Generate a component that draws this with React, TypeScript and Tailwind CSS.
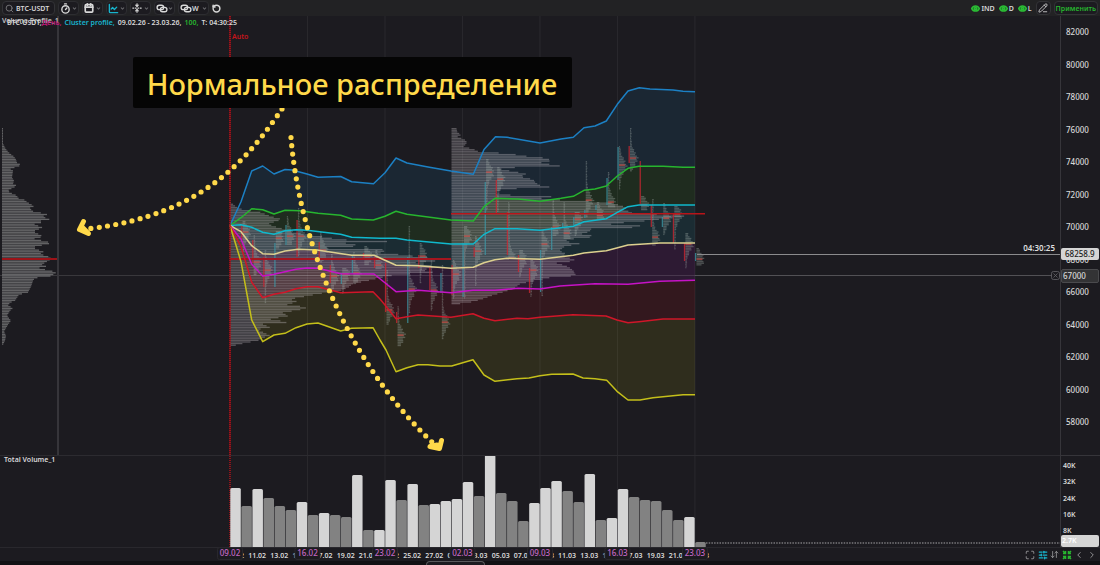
import {
  Search,
  Timer,
  Calendar,
  ChartLine,
  FoldVertical,
  RotateCcw,
  Eye,
  PencilLine,
  Maximize,
  SlidersHorizontal,
  ArrowDownUp,
  ChevronLeft,
  ChevronRight,
  ChevronDown,
} from 'lucide-react';
import type { ReactNode } from 'react';

type Point = [number, number];

const DAY = 11.07;
const START_X = 230;
const ROW = 1.62;

const dayX = (i: number) => START_X + i * DAY;

// Standard deviation bands, top to bottom
const bands: { stroke: string; fill: string; points: Point[] }[] = [
  {
    stroke: '#1c80c4',
    fill: '#1b2733',
    points: [[230, 225.5], [241, 201.7], [251.7, 171], [262.7, 166], [274, 174], [285, 169.5], [292, 170], [307, 174], [318, 177.3], [340.7, 176.5], [351.7, 181.7], [373.5, 183.7], [385, 172.7], [396, 158], [407, 163], [428, 167], [451, 171], [473.3, 174.3], [484, 149.5], [495.5, 136.7], [507, 137.3], [540, 143], [561, 139], [573.3, 137.3], [584, 127.7], [595, 126], [606.3, 121], [617.3, 104.3], [628, 91], [639.3, 87.7], [650, 89], [673, 90], [683, 91.3], [695, 91.7]],
  },
  {
    stroke: '#27b52f',
    fill: '#1f2c1f',
    points: [[230, 225.5], [241, 217.7], [251.7, 208.7], [262.7, 209.7], [274, 214], [285, 210.3], [300, 210.7], [318, 213.3], [340.7, 215.3], [351.7, 219], [373.3, 220], [385, 216.3], [396, 211.3], [407, 214.3], [428, 217], [451, 220], [473.3, 221], [484, 206.7], [495, 198.3], [518, 199], [540, 201.2], [561, 198.3], [573.3, 196.3], [584, 190.3], [595, 189], [606.3, 186], [617.3, 176], [628, 168.3], [639, 166.3], [663, 166.3], [683, 167.3], [695, 167.3]],
  },
  {
    stroke: '#10b8cc',
    fill: '#1b2c33',
    points: [[230, 225.5], [241, 224.7], [251.7, 227.3], [262.7, 232.3], [274, 234.3], [285, 230.7], [296, 229.7], [307, 230.3], [340.7, 234.3], [351.7, 237.3], [380, 238.3], [396, 238.3], [407, 240], [451, 244], [473.3, 244], [484, 234.3], [495, 228.7], [517, 228.7], [540, 230.2], [573.3, 226.3], [584, 221.7], [606.3, 218.7], [617.3, 212.3], [628, 206.7], [639, 205], [695, 205]],
  },
  {
    stroke: '#dcd08f',
    fill: '#2d1a33',
    points: [[230, 225.5], [241, 231.7], [251.7, 245.7], [262.7, 253.7], [274, 254.3], [285, 251], [298, 249.3], [317, 250], [351.7, 255.3], [374, 255.3], [396, 265.3], [418, 265.7], [451, 268.3], [473.3, 267.3], [484, 262.7], [495, 259.7], [507, 258.3], [540, 259.3], [573.3, 255.3], [584, 253], [606.3, 250.7], [628, 245], [660, 243], [695, 243]],
  },
  {
    stroke: '#c613c6',
    fill: '#33181e',
    points: [[230, 225.5], [241, 239.3], [251.7, 264.3], [262.7, 276], [274, 274.3], [296, 269.3], [307, 268], [318, 268.3], [340.7, 273.7], [374, 274], [396, 291.7], [418, 290.3], [451, 292.7], [473, 290.3], [495, 290.3], [518, 288.3], [540, 289], [560, 286], [595, 283.7], [628, 284.3], [660, 281.3], [695, 280.3]],
  },
  {
    stroke: '#cf1629',
    fill: '#2f2d1d',
    points: [[230, 225.5], [241, 246.7], [251.7, 282.3], [262.7, 297.7], [274, 294.3], [285, 292.3], [296, 288.7], [307, 286.7], [318, 286.7], [340.7, 292.7], [373, 291.7], [380, 299], [385, 305], [396, 318.7], [407, 316.7], [418, 315], [451, 317.3], [473, 313.7], [484, 318.3], [495, 320.7], [517, 318.3], [528, 318.7], [540, 317.3], [573, 314.7], [606, 316], [617, 320], [628, 322.7], [639, 321.7], [663, 319], [695, 319]],
  },
  {
    stroke: '#c4bf1a',
    fill: 'none',
    points: [[230, 225.5], [241, 261.7], [251.7, 320], [262.7, 341.7], [274, 335], [285, 333.3], [296, 327.7], [307, 324], [318, 323], [340.7, 331], [351.7, 328.3], [373, 327.7], [380, 340], [386, 350], [396, 371.7], [407, 367.7], [418, 364.7], [428, 364.7], [440, 366], [451.7, 366], [462.7, 362.7], [473, 359.7], [484, 375], [495, 381.3], [517, 378.7], [529, 378], [540, 375.7], [551.7, 374.3], [573, 374], [583, 378], [595, 378.7], [606.7, 380.3], [617, 391.3], [628, 400], [640, 400], [653, 397.7], [683, 394.7], [695, 394.7]],
  },
];

// [y, width] samples of each horizontal volume profile
const totalProfile: Point[] = [
  [128, 0], [132, 1], [143, 1], [147, 3], [150, 5], [153, 8], [156, 12], [159, 14], [162, 15], [164.3, 19], [166, 16], [168, 8], [170, 11], [177, 10], [180, 12], [183, 11], [185.3, 15], [187, 11], [190, 6], [192, 8], [195, 15], [197.5, 16], [199, 22], [202, 26], [205.5, 32], [207.5, 28], [210, 30], [211.7, 33], [213, 47], [214.7, 43], [216.5, 40], [218.3, 50], [220, 39], [222, 39], [224, 31], [226.3, 41], [228, 38], [230, 33], [232, 33], [234, 38], [236, 41], [238, 32], [240, 40], [242.3, 50], [244, 43], [246, 33], [248.5, 33], [250.7, 42], [253.3, 38], [255.5, 45], [257, 49], [259, 48], [262, 43], [264, 40], [265.7, 44], [267.7, 36], [270, 49], [272, 54], [274, 51], [275.7, 48], [277.3, 33], [280, 31], [286, 29], [291.7, 26], [294, 17], [300, 13], [302, 8], [305, 6], [307.3, 11], [310, 8], [315, 5], [320, 9], [324, 6], [331, 2], [335, 4], [340, 3], [346, 0],
];
const firstProfile: Point[] = [
  [202, 1], [203.5, 3], [206, 6], [208, 9], [210, 20], [212, 32], [214, 36], [217, 45], [218.7, 52], [221, 45], [223.5, 38], [226, 45], [228, 52], [231, 60], [233.5, 75], [236, 92], [239, 110], [241, 160], [242.7, 110], [245, 135], [247.5, 95], [249.3, 165], [251.7, 145], [254, 170], [257, 196], [259, 221], [262, 185], [264, 190], [266.7, 216], [269, 190], [271.7, 203], [274.3, 165], [277, 150], [280, 138], [283, 123], [287, 118], [290, 110], [293, 90], [296.7, 70], [298.5, 60], [301.7, 69], [303.5, 53], [306.7, 78], [309, 70], [312.5, 51], [315, 60], [318.5, 40], [321.7, 59], [323.5, 33], [326.7, 40], [329, 27], [332, 34], [335, 40], [337, 33], [340, 28], [342.3, 15], [345, 4], [347, 0],
];
const secondProfile: Point[] = [
  [128, 5], [132, 6], [134, 10], [136, 6], [140, 15], [143, 15], [146, 12], [148.5, 22], [151, 27], [153, 58], [156, 78], [157.5, 95], [160, 100], [163, 85], [164.8, 121], [167, 60], [168.5, 50], [171, 62], [173, 75], [176, 69], [179, 82], [182, 84], [185, 89], [186.5, 99], [188.5, 52], [192, 42], [194, 48], [196, 100], [198, 88], [200, 120], [202, 158], [204.5, 168], [207, 175], [209, 172], [211, 178], [213, 182], [215, 236], [217, 222], [219, 205], [221, 187], [222.5, 164], [224, 158], [226, 209], [228, 140], [231, 138], [233.5, 130], [235.8, 146], [238, 123], [240.5, 112], [243, 128], [246, 113], [250, 108], [253, 114], [255.5, 112], [257.5, 118], [260, 125], [262.5, 105], [265, 114], [267, 118], [270, 122], [272.5, 123], [275, 125], [277, 98], [280, 84], [283, 69], [288, 62], [292, 50], [295, 40], [298, 32], [301, 22], [303.5, 5], [305, 0],
];

interface Candle {
  day: number;
  open: number;
  close: number;
  high: number;
  low: number;
  poc: number;
  up: boolean;
}

const c = (day: number, open: number, close: number, high: number, low: number, poc: number, up: boolean): Candle => ({
  day, open, close, high, low, poc, up,
});

const candles: Candle[] = [
  c(1, 225, 240, 221, 252, 232, false),
  c(2, 240, 263, 235, 277, 262, false),
  c(3, 257, 287, 250, 304, 270, false),
  c(4, 243, 287, 231, 250, 238, true),
  c(5, 225, 245, 216, 246, 236, true),
  c(6, 220, 257, 208, 258, 236, false),
  c(8, 242, 260, 232, 264, 250, false),
  c(9, 265, 283, 254, 294, 276, false),
  c(10, 273, 284, 268, 294, 274, true),
  c(11, 255, 273, 252, 286, 273, true),
  c(12, 253, 260, 246, 266, 256, false),
  c(13, 257, 268, 250, 270, 265, false),
  c(14, 263, 312, 270, 326, 310, false),
  c(15, 312, 323, 306, 347, 335, false),
  c(16, 257, 323, 226, 314, 289, true),
  c(17, 255, 268, 243, 284, 256, false),
  c(18, 267, 290, 259, 311, 290, false),
  c(19, 273, 293, 265, 340, 322, true),
  c(20, 265, 295, 260, 300, 274, false),
  c(21, 243, 297, 226, 300, 236, true),
  c(22, 247, 257, 236, 287, 251, false),
  c(23, 182, 255, 159, 211, 172, true),
  c(24, 180, 213, 167, 213, 179, false),
  c(25, 212, 255, 202, 259, 258, false),
  c(26, 255, 272, 250, 278, 259, false),
  c(27, 268, 293, 260, 298, 270, false),
  c(28, 250, 292, 230, 297, 244, true),
  c(29, 227, 250, 199, 237, 227, true),
  c(30, 223, 228, 202, 240, 233, true),
  c(31, 217, 225, 212, 237, 219, true),
  c(32, 210, 218, 161, 218, 200, true),
  c(33, 205, 210, 202, 220, 215, true),
  c(34, 178, 205, 172, 208, 202, true),
  c(35, 147, 180, 146, 190, 165, true),
  c(36, 146, 163, 128, 172, 158, false),
  c(37, 161, 205, 196, 211, 205, false),
  c(38, 205, 227, 199, 246, 237, false),
  c(39, 217, 227, 203, 237, 218, true),
  c(40, 213, 243, 206, 250, 214, false),
  c(41, 243, 261, 233, 270, 244, false),
  c(42, 253, 261, 248, 267, 259, true),
];

const volumes = [
  59, 41, 58, 49, 41, 37, 45, 32, 34, 32, 30, 72, 17, 17, 67, 47, 63, 42, 43, 46, 48, 65, 51, 92, 54, 46, 26, 44, 59,
  66, 56, 45, 73, 27, 29, 58, 50, 47, 46, 37, 27, 30, 5,
];
const buyDays = [0, 2, 6, 8, 11, 13, 14, 16, 18, 19, 20, 21, 23, 27, 28, 29, 32, 34, 35, 41];

const weekTicks = ['09.02', '16.02', '23.02', '02.03', '09.03', '16.03', '23.03'];
const dayTicks = [
  '09.02', '11.02', '13.02', '15.02', '17.02', '19.02', '21.02', '23.02', '25.02', '27.02', '01.03',
  '03.03', '05.03', '07.03', '09.03', '11.03', '13.03', '15.03', '17.03', '19.03', '21.03', '23.03',
];
const priceTicks = [82000, 80000, 78000, 76000, 74000, 72000, 70000, 68000, 66000, 64000, 62000, 60000, 58000];
const volumeTicks = ['40K', '32K', '24K', '16K', '8K'];

const toPoints = (points: Point[]) => points.map((p) => p.join(',')).join(' ');

function widthAt(samples: Point[], y: number) {
  for (let i = 1; i < samples.length; i++) {
    const [y0, w0] = samples[i - 1];
    const [y1, w1] = samples[i];
    if (y <= y1) return w0 + ((w1 - w0) * (y - y0)) / (y1 - y0);
  }
  return 0;
}

function Profile({ x, samples, color }: { x: number; samples: Point[]; color: string }) {
  const top = samples[0][0];
  const rows = Math.floor((samples[samples.length - 1][0] - top) / ROW);
  return (
    <g fill={color}>
      {Array.from({ length: rows }, (_, i) => {
        const y = top + i * ROW;
        return <rect key={i} x={x} y={y} width={Math.max(1, widthAt(samples, y))} height={1.3} />;
      })}
    </g>
  );
}

function DayCluster({ day, open, close, high, low, poc, up }: Candle) {
  const x = dayX(day) + 0.5;
  const rows = Math.floor((low - high) / ROW);
  return (
    <g>
      {Array.from({ length: rows }, (_, i) => {
        const y = high + i * ROW;
        const near = Math.exp(-Math.pow((y - poc) / 9, 2));
        const width = 1 + near * 5 + ((i * 7 + day * 3) % 5) * 0.5 * (0.3 + near);
        return <rect key={i} x={x + 1} y={y} width={width} height={1.3} fill="#a9b3b0" opacity={0.36} />;
      })}
      <rect x={x - 0.5} y={open} width={1.3} height={close - open} fill={up ? '#3f9aa8' : '#d32732'} opacity={0.75} />
      <rect x={x + 1} y={poc - 0.5} width={6} height={1.2} fill="#d8443c" opacity={0.8} />
    </g>
  );
}

function WeekGrid({ y, height }: { y: number; height: number }) {
  return (
    <g fill="#fff" opacity="0.055">
      {weekTicks.slice(1).map((t, i) => (
        <rect key={t} x={dayX((i + 1) * 7) - 0.5} y={y} width="1" height={height} />
      ))}
    </g>
  );
}

function PriceChart() {
  return (
    <svg viewBox="0 16 1060 439" className="block w-full h-auto">
      {bands.slice(0, -1).map((band, i) => (
        <polygon
          key={band.stroke}
          points={toPoints([...band.points, ...[...bands[i + 1].points].reverse()])}
          fill={band.fill}
        />
      ))}
      <WeekGrid y={16} height={439} />

      <Profile x={2} samples={totalProfile} color="#646466" />
      <Profile x={230} samples={firstProfile} color="rgba(205,200,205,0.35)" />
      <Profile x={451.5} samples={secondProfile} color="rgba(205,200,205,0.35)" />

      {/* Crosshair */}
      <rect x="0" y="275" width="1060" height="1" fill="#fff" opacity="0.13" />
      <rect x="695" y="275" width="365" height="1" fill="#fff" opacity="0.13" />

      {candles.map((candle) => (
        <DayCluster key={candle.day} {...candle} />
      ))}

      {/* Points of control */}
      <rect x="2" y="258" width="56" height="2" fill="#9c1318" />
      <rect x="230" y="258" width="221" height="2" fill="#a3161f" />
      <rect x="451" y="213" width="254" height="1.5" fill="#b81419" />

      {bands.map((band) => (
        <polyline key={band.stroke} points={toPoints(band.points)} fill="none" stroke={band.stroke} strokeWidth="1.5" strokeLinejoin="round" />
      ))}

      <rect x="57" y="16" width="2" height="439" fill="#36353a" />
      <path d="M230 16V455" stroke="#7c1219" strokeWidth="1" />
      <path d="M230 16V455" stroke="#c41119" strokeWidth="1.4" strokeDasharray="1 1" />
      <text x="232" y="39" fontSize="7" fill="#c4151b">Auto</text>

      {/* Last price */}
      <rect x="697" y="254" width="363" height="1" fill="#8b8b8d" />
      <text x="1055" y="251" fontSize="8" fill="#dedede" textAnchor="end">04:30:25</text>
      <g fill="#1c1b20" stroke="#66656a" strokeWidth="0.8">
        <rect x="1051.5" y="271.5" width="8" height="8" rx="2" />
        <path d="M1053.5 273.5l4 4m0-4l-4 4" />
      </g>

      {/* Hand-drawn arrows */}
      <g fill="none" stroke="#ffd94a" strokeLinecap="round" strokeLinejoin="round" strokeWidth="5.2">
        <path d="M282 109C250 155 205 215 90 228.5" strokeDasharray="0 8.35" />
        <path d="M291 137.5C298 225 337 352 433 443" strokeDasharray="0 8.35" />
        <path d="M83.5 221.5L79.500 229.500L88.500 233.500L83 228" strokeWidth="5" />
        <path d="M441.500 440.500L439.500 448.500L430 446.500L437 445" strokeWidth="5" />
      </g>
    </svg>
  );
}

function VolumeChart() {
  return (
    <svg viewBox="0 456 1060 91" className="block w-full h-auto">
      <WeekGrid y={456} height={91} />
      <path d="M230 456V547" stroke="#c41119" strokeWidth="1.4" strokeDasharray="1 1" />
      {volumes.map((v, i) => (
        <path
          key={i}
          d={`M${dayX(i) + 0.3} 547.5v${-v + 1}q0 -1.500 1.500 -1.500h7.500q1.500 0 1.500 1.500v${v - 1}z`}
          fill={buyDays.includes(i) ? '#d5d5d5' : '#828282'}
        />
      ))}
      <path d="M706 543H1060" stroke="#a5a5a7" strokeWidth="1.2" strokeDasharray="1.5 1.2" />
    </svg>
  );
}

function DateAxis() {
  return (
    <svg viewBox="0 547 1020 14" className="block w-full h-auto">
      <rect x="0" y="547" width="1020" height="1" fill="#29282d" />
      {dayTicks.map((label, i) => (
        <text key={label} x={dayX(i * 2) + 5} y="558" fontSize="7" fill="#d8d8d8" textAnchor="middle">
          {label}
        </text>
      ))}
      {weekTicks.map((label, i) => (
        <g key={label}>
          <rect x={dayX(i * 7) - 12.5} y="547.5" width="25" height="12" rx="2" fill="#1c1b20" stroke="#29282d" />
          <text x={dayX(i * 7)} y="556" fontSize="8" fontWeight="500" fill="#c468c4" textAnchor="middle">{label}</text>
        </g>
      ))}
    </svg>
  );
}

function ToolButton({ label, className, children }: { label: string; className: string; children: ReactNode }) {
  return (
    <button
      type="button"
      aria-label={label}
      className={`flex h-[14px] items-center justify-between rounded-sm border border-[#2d2d31] bg-[#1c1b20] px-px ${className}`}
    >
      {children}
      <ChevronDown className="h-[5px] w-[5px] text-[#66666a]" strokeWidth={5} />
    </button>
  );
}

function EyeToggle({ label }: { label: string }) {
  return (
    <button type="button" className="flex items-center gap-px text-[7px] leading-none">
      <Eye className="h-[9px] w-[9px] fill-[#1c6a23] text-[#2bbd35]" strokeWidth={4} />
      {label}
    </button>
  );
}

function LinkIcon() {
  return (
    <svg viewBox="0 0 22 16" className="h-[9px] w-[12px] shrink-0" fill="none" stroke="currentColor" strokeWidth="2.5">
      <rect x="2" y="2" width="12" height="8" rx="4" />
      <rect x="8" y="6" width="12" height="8" rx="4" />
    </svg>
  );
}

function FitIcon() {
  return (
    <svg viewBox="0 0 20 20" className="h-[10px] w-[10px]" fill="none" stroke="#27b52f" strokeWidth="3">
      <path d="M2 7l5 0l0-5M7 7L2 2M18 7h-5V2M13 7l5-5M2 13h5v5M7 13l-5 5M18 13h-5v5M13 13l5 5" />
    </svg>
  );
}

function Toolbar() {
  return (
    <header className="flex h-4 items-center gap-[3px] bg-[#222224] pl-[2px] pr-[2px]">
      <label className="flex h-[14px] w-[53px] items-center gap-[2px] rounded-sm border border-[#333337] bg-[#1c1b20] pl-[2px]">
        <Search className="h-[9px] w-[9px] shrink-0 text-[#8b8b8e]" />
        <input
          type="text"
          aria-label="Symbol"
          defaultValue="BTC-USDT"
          className="w-full min-w-0 bg-transparent text-[7px] leading-none outline-none"
        />
      </label>
      <ToolButton label="Timeframe" className="w-[21px]"><Timer className="h-[11px] w-[11px]" strokeWidth={3} /></ToolButton>
      <ToolButton label="Dates" className="w-[21px]"><Calendar className="h-[10px] w-[10px]" strokeWidth={4} /></ToolButton>
      <ToolButton label="Chart type" className="w-[21px]">
        <ChartLine className="h-[11px] w-[11px] text-[#18b4cc]" strokeWidth={3} />
      </ToolButton>
      <ToolButton label="Scale" className="w-[21px]"><FoldVertical className="h-[10px] w-[10px]" strokeWidth={3} /></ToolButton>
      <ToolButton label="Link" className="w-[21px]"><LinkIcon /></ToolButton>
      <ToolButton label="Workspace link" className="w-[31px]">
        <span className="flex items-center text-[7px] leading-none"><LinkIcon />W</span>
      </ToolButton>
      <button type="button" aria-label="Undo">
        <RotateCcw className="h-[9px] w-[9px]" strokeWidth={4} />
      </button>

      <div className="ml-auto flex items-center gap-1">
        <EyeToggle label="IND" />
        <EyeToggle label="D" />
        <EyeToggle label="L" />
        <button
          type="button"
          aria-label="Draw"
          className="flex h-[14px] w-[15px] items-center justify-center rounded-sm border border-[#333337] bg-[#1c1b20]"
        >
          <PencilLine className="h-[10px] w-[10px]" />
        </button>
      </div>
      <button
        type="button"
        className="h-[14px] rounded-sm border border-[#333337] bg-[#1c1b20] px-px text-[7px] leading-none text-[#27b52f]"
      >
        Применить
      </button>
    </header>
  );
}

function Legend() {
  return (
    <>
      <p className="absolute left-[2px] top-px text-[7px] leading-[8px] text-[#c4c4c4]">Volume Profile_1</p>
      <p className="absolute left-[7px] top-[2px] flex gap-[3px] whitespace-nowrap text-[7px] leading-[10px]">
        <span>BTC-USDT,<span className="text-[#c4187a]">День,</span></span>
        <span className="text-[#18b4cc]">Cluster profile,</span>
        <span>09.02.26 - 23.03.26,</span>
        <span className="text-[#27b52f]">100,</span>
        <span>T: 04:30:25</span>
      </p>
    </>
  );
}

export default function App() {
  return (
    <main className="flex min-h-screen flex-col overflow-hidden bg-[#1c1b20] font-['Noto_Sans',sans-serif] font-semibold text-[#d8d8d8]">
      <Toolbar />

      <section className="flex">
        <div className="relative min-w-0 flex-1">
          <PriceChart />
          <Legend />
          <h1 className="absolute left-[12.5%] top-[41px] h-[51px] w-[439px] whitespace-nowrap rounded-[2px] bg-[#050505] text-center text-[29px] font-medium leading-[54px] text-[#ffd94a]">
            Нормальное распределение
          </h1>
        </div>
        <div className="relative flex w-10 flex-col justify-between border-l border-[#36353a] pb-[27px] pl-[5px] pt-[10px] text-[8px] font-medium leading-[12px]">
          {priceTicks.map((price) => (
            <span key={price}>{price}</span>
          ))}
          <span className="absolute left-0 top-[232px] w-[38px] rounded-[2px] bg-[#d5d5d5] pl-1 text-[#1c1b20]">68258.9</span>
          <span className="absolute left-0 top-[253px] w-[38px] rounded-[2px] border border-[#4a4a4d] bg-[#333335] pl-px">67000</span>
        </div>
      </section>

      <section className="flex">
        <div className="relative min-w-0 flex-1 border-t border-[#2c2b30]">
          <VolumeChart />
          <h2 className="absolute left-1 top-0 text-[7px] leading-[8px]">Total Volume_1</h2>
        </div>
        <div className="relative flex w-10 flex-col justify-between border-l border-t border-[#36353a] pb-[10px] pl-[2px] pt-1 text-[7px] leading-[12px]">
          {volumeTicks.map((tick) => (
            <span key={tick}>{tick}</span>
          ))}
          <span className="absolute bottom-0 left-0 w-[38px] rounded-[2px] bg-[#d5d5d5] pl-px text-white">2.7K</span>
        </div>
      </section>

      <footer className="flex">
        <div className="min-w-0 flex-1">
          <DateAxis />
        </div>
        <nav className="flex w-20 items-center justify-between border-t border-[#29282d] pl-[5px] pr-[3px] text-[#a5a5a7]">
          <button type="button" aria-label="Full screen"><Maximize className="h-[10px] w-[10px]" /></button>
          <button type="button" aria-label="Settings"><SlidersHorizontal className="h-[10px] w-[10px] text-[#18b4cc]" strokeWidth={3} /></button>
          <button type="button" aria-label="Auto scale"><ArrowDownUp className="h-[9px] w-[9px]" /></button>
          <button type="button" aria-label="Fit"><FitIcon /></button>
          <button type="button" aria-label="Back"><ChevronLeft className="h-[10px] w-[10px]" /></button>
          <button type="button" aria-label="Forward"><ChevronRight className="h-[10px] w-[10px]" /></button>
        </nav>
      </footer>

      <div className="flex flex-1 items-end bg-[#121114] pl-[38.7%]">
        <div className="h-1 w-[59px] rounded-t-sm border border-b-0 border-[#5a5a5d] bg-[#1c1b20]" />
      </div>
    </main>
  );
}
